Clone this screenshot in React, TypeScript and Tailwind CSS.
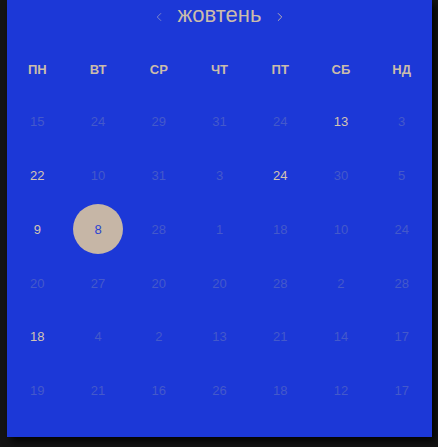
import { ChevronLeft, ChevronRight } from "lucide-react";

const weekdays = ["ПН", "ВТ", "СР", "ЧТ", "ПТ", "СБ", "НД"];

// each cell: [day, isCurrentMonth]
const weeks: [number, boolean][][] = [
  [[15, false], [24, false], [29, false], [31, false], [24, false], [13, true], [3, false]],
  [[22, true], [10, false], [31, false], [3, false], [24, true], [30, false], [5, false]],
  [[9, true], [8, true], [28, false], [1, false], [18, false], [10, false], [24, false]],
  [[20, false], [27, false], [20, false], [20, false], [28, false], [2, false], [28, false]],
  [[18, true], [4, false], [2, false], [13, false], [21, false], [14, false], [17, false]],
  [[19, false], [21, false], [16, false], [26, false], [18, false], [12, false], [17, false]],
];

const selected = { week: 2, day: 1 };

export default function App() {
  return (
    <div className="w-[438px] h-[447px] bg-[#141414] font-['Liberation_Sans',Arial,sans-serif]">
      <div className="ml-[7px] w-[425px] h-[437px] bg-[#1c38d7] shadow-[4px_4px_8px_rgba(0,0,0,0.95)] flex flex-col">
        <div className="h-[32px] flex items-center justify-center gap-[12px] pt-[1px]">
          <ChevronLeft className="w-[14px] h-[14px] text-[#8a8fc8]" strokeWidth={1.5} />
          <span className="text-[22px] leading-none text-[#cbbcab] -mt-[3px]">жовтень</span>
          <ChevronRight className="w-[14px] h-[14px] text-[#cbbcab]" strokeWidth={1.5} />
        </div>

        <div className="grid grid-cols-7 h-[50px] mt-[13px] items-center">
          {weekdays.map((d) => (
            <div key={d} className="text-center text-[13px] font-bold text-[#cbbcab]">
              {d}
            </div>
          ))}
        </div>

        {weeks.map((week, wi) => (
          <div key={wi} className="grid grid-cols-7 h-[53.8px] items-center">
            {week.map(([day, current], di) => {
              const isSel = wi === selected.week && di === selected.day;
              return (
                <div key={di} className="flex items-center justify-center">
                  {isSel ? (
                    <div className="w-[50px] h-[50px] rounded-full bg-[#c6b6a6] flex items-center justify-center text-[13px] text-[#2a44d2]">
                      {day}
                    </div>
                  ) : (
                    <span
                      className={
                        current
                          ? "text-[13px] text-[#d3c4b2]"
                          : "text-[13px] text-[#4459cb]"
                      }
                    >
                      {day}
                    </span>
                  )}
                </div>
              );
            })}
          </div>
        ))}
      </div>
    </div>
  );
}
